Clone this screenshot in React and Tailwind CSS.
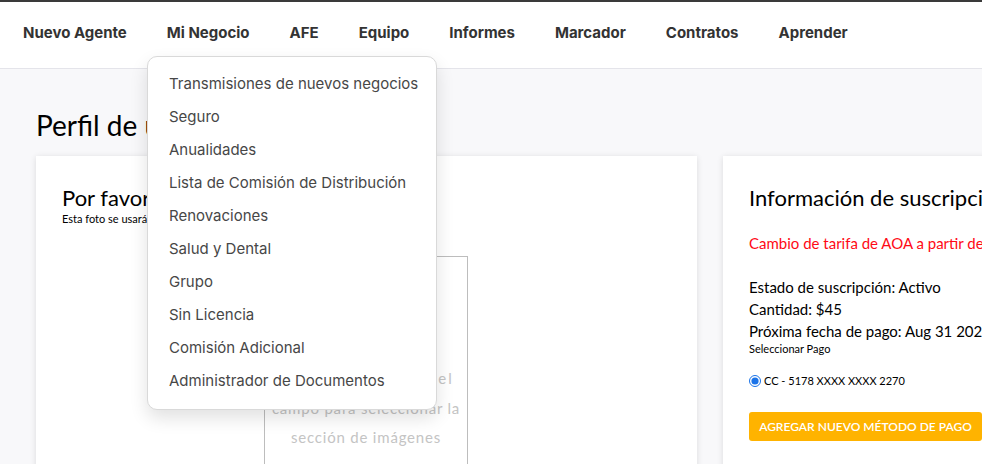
import React from 'react';

const navItems = ['Nuevo Agente', 'Mi Negocio', 'AFE', 'Equipo', 'Informes', 'Marcador', 'Contratos', 'Aprender'];

const menuItems = [
    'Transmisiones de nuevos negocios',
    'Seguro',
    'Anualidades',
    'Lista de Comisión de Distribución',
    'Renovaciones',
    'Salud y Dental',
    'Grupo',
    'Sin Licencia',
    'Comisión Adicional',
    'Administrador de Documentos',
];

const sans = { fontFamily: 'Inter, "Open Sans", sans-serif' };
const head = { fontFamily: 'Lato, "Open Sans", sans-serif' };

const App = () => {
    return (
        <div className="relative w-[982px] h-[464px] overflow-hidden bg-[#f8f8fa]">
            {/* top nav */}
            <nav className="h-[69px] bg-white border-t-2 border-[#3a3a3a] border-b border-b-[#e4e4ea] flex items-center pl-[23px] pb-[3px] gap-[40px]" style={sans}>
                {navItems.map((item) => (
                    <span key={item} className="text-[15px] font-bold text-[#333]">{item}</span>
                ))}
            </nav>

            {/* page body */}
            <div className="pl-9 pt-[38px]" style={head}>
                <h1 className="text-[28px] leading-[36px] text-black">Perfil de usuario</h1>

                <div className="flex gap-[26px] mt-[13px] w-[1200px]">
                    <div className="w-[661px] h-[340px] bg-white shadow-[0_1px_6px_rgba(0,0,0,0.12)] px-[26px] pt-[28px]">
                        <h2 className="text-[22px] leading-[28px] text-black">Por favor, sube una foto de perfil</h2>
                        <p className="text-[11px] text-black mt-[-1px]">Esta foto se usará en tu perfil de agente</p>

                        <div className="ml-[202px] mt-[28px] w-[204px] h-[230px] border border-[#bdbdbd] flex flex-col">
                            <div className="flex-1 flex items-end justify-center pb-[14px]">
                                <p className="text-[15px] leading-[29.5px] tracking-[0.8px] text-[#c4c4c4] text-center whitespace-nowrap">
                                    <span className="tracking-[1.9px]">Haga doble clic en el</span><br />campo para seleccionar la<br />sección de imágenes
                                </p>
                            </div>
                            <div className="h-[18px] flex">
                                <div className="w-[20px] bg-[#263238]" />
                                <div className="w-[108px] bg-[#ffb300]" />
                                <div className="w-[39px] bg-[#263238]" />
                                <div className="flex-1 bg-[#ffb300]" />
                            </div>
                        </div>
                    </div>

                    <div className="w-[420px] h-[340px] bg-white shadow-[0_1px_6px_rgba(0,0,0,0.12)] px-[26px] pt-[28px]">
                        <h2 className="text-[22px] leading-[28px] text-black whitespace-nowrap">Información de suscripción</h2>
                        <p className="text-[15px] text-[#ff0a16] mt-[20px] whitespace-nowrap">Cambio de tarifa de AOA a partir del 1 de septiembre</p>
                        <div className="mt-[21px] text-[15px] leading-[22px] text-black">
                            <p>Estado de suscripción: Activo</p>
                            <p>Cantidad: $45</p>
                            <p className="whitespace-nowrap">Próxima fecha de pago: Aug 31 2025</p>
                        </div>
                        <p className="text-[11px] text-black leading-[14px]">Seleccionar Pago</p>
                        <label className="flex items-center gap-[3px] mt-[17px] text-[11px] text-black">
                            <input type="radio" defaultChecked className="w-[12px] h-[12px] m-0 accent-[#1a73e8]" />
                            CC - 5178 XXXX XXXX 2270
                        </label>
                        <button className="mt-[23px] w-[233px] h-[29px] bg-[#ffb300] rounded-[3px] text-white text-[12px] font-semibold">
                            AGREGAR NUEVO MÉTODO DE PAGO
                        </button>
                    </div>
                </div>
            </div>

            {/* Mi Negocio dropdown */}
            <div className="absolute left-[147px] top-[56px] w-[290px] bg-white border border-[#d9d9d9] rounded-[10px] shadow-[0_8px_18px_rgba(0,0,0,0.12)] py-[11px]" style={sans}>
                {menuItems.map((item) => (
                    <div key={item} className="h-[33px] flex items-center pl-[21px] text-[15px] text-[#474747]">{item}</div>
                ))}
            </div>
        </div>
    );
};

export default App;
